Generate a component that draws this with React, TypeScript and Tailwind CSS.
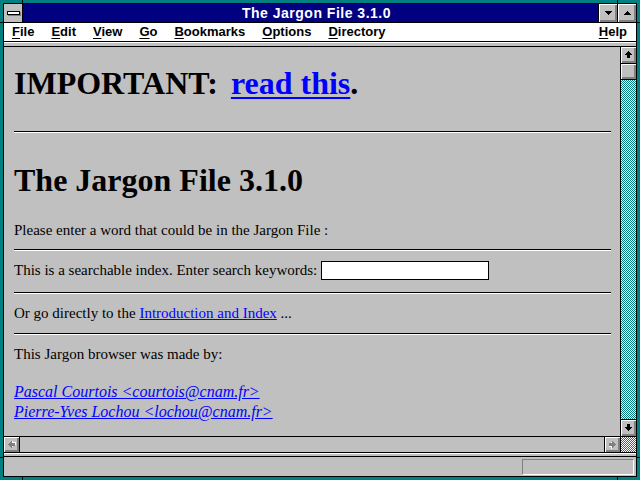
import React from "react";

const bevel =
  "bg-[#c0c0c0] shadow-[inset_1px_1px_0_#fff,inset_-1px_-1px_0_#808080,inset_-2px_-2px_0_#808080]";

const checker =
  "bg-[conic-gradient(#008080_25%,#fff_0_50%,#008080_0_75%,#fff_0)] bg-[length:2px_2px]";

// pixel rows for a Win 3.1 scroll arrow pointing up
const arrowRows = [
  [3, 1],
  [2, 3],
  [1, 5],
  [0, 7],
  [2, 3],
  [2, 3],
  [2, 3],
];

function ScrollArrow({
  dir,
  disabled = false,
}: {
  dir: "up" | "down" | "left" | "right";
  disabled?: boolean;
}) {
  const rot = { up: 0, down: 180, left: 270, right: 90 }[dir];
  const rects = (fill: string, off: number) =>
    arrowRows.map(([x, w], y) => (
      <rect key={fill + y} x={x + off} y={y + off} width={w} height={1} fill={fill} />
    ));
  return (
    <svg width="8" height="8" viewBox="0 0 8 8" shapeRendering="crispEdges">
      <g transform={`rotate(${rot} 3.5 3.5)`}>
        {disabled && rects("#ffffff", 1)}
        {rects(disabled ? "#808080" : "#000000", 0)}
      </g>
    </svg>
  );
}

function Triangle({ up }: { up: boolean }) {
  const rows = [
    [0, 7],
    [1, 5],
    [2, 3],
    [3, 1],
  ];
  return (
    <svg width="7" height="4" viewBox="0 0 7 4" shapeRendering="crispEdges">
      {rows.map(([x, w], i) => (
        <rect key={i} x={x} y={up ? 3 - i : i} width={w} height={1} fill="#000" />
      ))}
    </svg>
  );
}

const menu = ["File", "Edit", "View", "Go", "Bookmarks", "Options", "Directory"];

function MenuItem({ label }: { label: string }) {
  return (
    <span className="pl-[8px] pr-[9px]">
      <span className="underline decoration-1 underline-offset-[2px]">{label[0]}</span>
      {label.slice(1)}
    </span>
  );
}

function Rule() {
  return <div className="h-[2px] border-t border-black border-b border-b-white" />;
}

export default function App() {
  return (
    <div className="relative w-[640px] h-[480px] overflow-hidden bg-[#008080] p-[3px]">
      {/* frame notches */}
      <div className="absolute left-[22px] top-0 w-px h-[3px] bg-black" />
      <div className="absolute left-[617px] top-0 w-px h-[3px] bg-black" />
      <div className="absolute left-[22px] bottom-0 w-px h-[3px] bg-black" />
      <div className="absolute left-[617px] bottom-0 w-px h-[3px] bg-black" />
      <div className="absolute left-0 top-[22px] w-[3px] h-px bg-black" />
      <div className="absolute right-0 top-[22px] w-[3px] h-px bg-black" />
      <div className="absolute left-0 top-[457px] w-[3px] h-px bg-black" />
      <div className="absolute right-0 top-[457px] w-[3px] h-px bg-black" />

      <div className="h-full border border-black flex flex-col bg-[#c0c0c0] font-['Liberation_Sans',sans-serif]">
        {/* Title bar */}
        <div className="h-[18px] flex shrink-0">
          <div className="w-[19px] border-r border-black bg-[#c0c0c0] flex items-center justify-center">
            <div className="w-[13px] h-[4px] border border-black bg-white shadow-[1px_1px_0_#808080]" />
          </div>
          <div className="flex-1 bg-[#000080] text-white text-[14px] font-bold leading-[18px] tracking-[0.5px] text-center pl-[12px]">
            The Jargon File 3.1.0
          </div>
          <div className={`w-[19px] border-l border-black flex items-center justify-center ${bevel}`}>
            <Triangle up={false} />
          </div>
          <div className={`w-[19px] border-l border-black flex items-center justify-center ${bevel}`}>
            <Triangle up />
          </div>
        </div>
        <div className="h-px bg-black shrink-0" />

        {/* Menu bar */}
        <div className="h-[18px] bg-white flex text-[13px] font-bold leading-[18px] text-black shrink-0">
          {menu.map((m) => (
            <MenuItem key={m} label={m} />
          ))}
          <div className="flex-1" />
          <MenuItem label="Help" />
        </div>
        <div className="h-px bg-black shrink-0" />
        <div className="h-px bg-white shrink-0" />
        <div className="h-[3px] shrink-0" />
        <div className="h-px bg-black shrink-0" />

        {/* Document + scrollbars */}
        <div className="flex-1 flex min-h-0">
          <div className="flex-1 flex flex-col min-w-0">
            <main className="flex-1 overflow-hidden pl-[10px] pr-[9px] text-black font-['Liberation_Serif',serif] text-[15px] leading-[20px]">
              <h1 className="mt-[16px] text-[32px] leading-[40px] font-bold whitespace-nowrap">
                IMPORTANT:{" "}
                <a className="ml-[5px] text-[#0000ff] underline decoration-2 underline-offset-[3px]">
                  read this
                </a>
                .
              </h1>
              <div className="mt-[28px]">
                <Rule />
              </div>
              <h1 className="mt-[27px] text-[32px] leading-[40px] font-bold">The Jargon File 3.1.0</h1>
              <p className="mt-[20px]">Please enter a word that could be in the Jargon File :</p>
              <div className="mt-[9px]">
                <Rule />
              </div>
              <div className="mt-[9px] flex items-start h-[20px]">
                <span>This is a searchable index. Enter search keywords:</span>
                <div className="ml-[4px] mt-px w-[168px] h-[19px] border border-black bg-white" />
              </div>
              <div className="mt-[12px]">
                <Rule />
              </div>
              <p className="mt-[9px]">
                Or go directly to the{" "}
                <a className="text-[#0000ff] underline">Introduction and Index</a> ...
              </p>
              <div className="mt-[10px]">
                <Rule />
              </div>
              <p className="mt-[9px]">This Jargon browser was made by:</p>
              <p className="mt-[18px] italic text-[16px] text-[#0000ff]">
                <a className="underline">Pascal Courtois &lt;courtois@cnam.fr&gt;</a>
                <br />
                <a className="underline">Pierre-Yves Lochou &lt;lochou@cnam.fr&gt;</a>
              </p>
            </main>

            {/* Horizontal scrollbar */}
            <div className="h-[16px] border-t border-black flex shrink-0">
              <div className={`w-[16px] border-r border-black flex items-center justify-center ${bevel}`}>
                <ScrollArrow dir="left" disabled />
              </div>
              <div className="flex-1 bg-[#c0c0c0]" />
              <div className={`w-[16px] border-l border-black flex items-center justify-center ${bevel}`}>
                <ScrollArrow dir="right" disabled />
              </div>
            </div>
          </div>

          {/* Vertical scrollbar */}
          <div className="w-[16px] border-l border-black flex flex-col shrink-0">
            <div className={`h-[16px] flex items-center justify-center ${bevel}`}>
              <ScrollArrow dir="up" />
            </div>
            <div className="h-px bg-black" />
            <div className={`h-[15px] ${bevel}`} />
            <div className="h-px bg-black" />
            <div className={`flex-1 ${checker}`} />
            <div className="h-px bg-black" />
            <div className={`h-[16px] flex items-center justify-center ${bevel}`}>
              <ScrollArrow dir="down" />
            </div>
            <div className="h-px bg-black" />
            <div className={`h-[15px] ${checker}`} />
          </div>
        </div>

        {/* Status bar */}
        <div className="h-px bg-black shrink-0" />
        <div className="h-px bg-white shrink-0" />
        <div className="h-[2px] shrink-0" />
        <div className="h-px bg-black shrink-0" />
        <div className="h-[19px] flex justify-end items-start pt-[2px] pr-[2px] shrink-0">
          <div className="w-[112px] h-[16px] border-t border-l border-[#808080] border-b border-b-white border-r border-r-white" />
        </div>
      </div>
    </div>
  );
}
